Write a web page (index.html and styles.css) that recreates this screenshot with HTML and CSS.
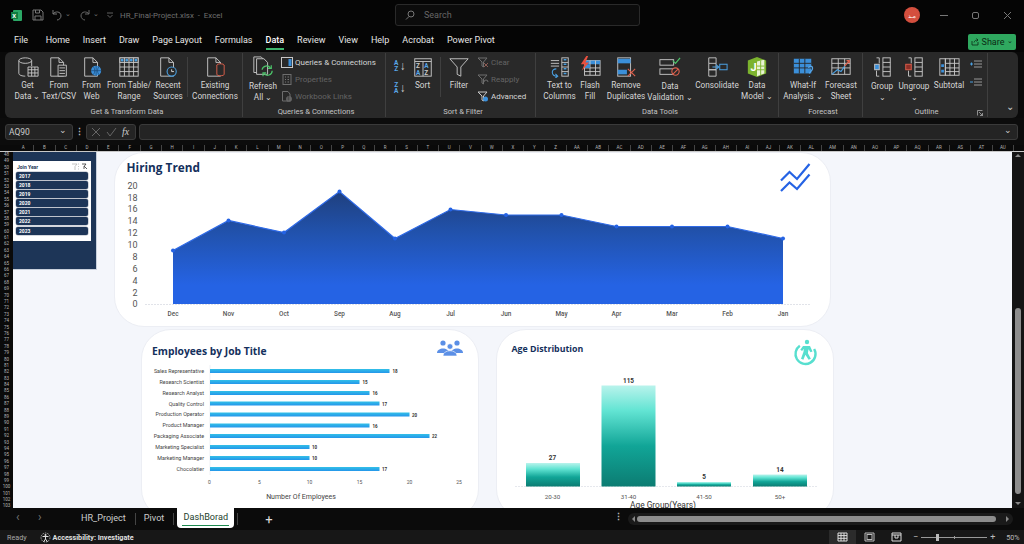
FILE: index.html
```html
<!DOCTYPE html>
<html lang="en">
<head>
    <meta charset="UTF-8">
    <title>HR_Final-Project.xlsx - Excel</title>
    <link rel="stylesheet" href="styles.css">
</head>
<body>
    <svg class="defs" width="0" height="0">
        <defs>
            <linearGradient id="areaFill" gradientUnits="userSpaceOnUse" x1="0" y1="190" x2="0" y2="285">
                <stop offset="0" stop-color="#1f3f7c"/>
                <stop offset="0.45" stop-color="#2152ad"/>
                <stop offset="1" stop-color="#2563e4"/>
            </linearGradient>
            <linearGradient id="ageFill" x1="0" y1="0" x2="0" y2="1">
                <stop offset="0" stop-color="#b9f3ec"/>
                <stop offset="0.25" stop-color="#62e4d3"/>
                <stop offset="0.6" stop-color="#11a597"/>
                <stop offset="1" stop-color="#0c7c72"/>
            </linearGradient>
            <linearGradient id="barFill" x1="0" y1="0" x2="0" y2="1">
                <stop offset="0" stop-color="#33c0e8"/>
                <stop offset="1" stop-color="#2496ea"/>
            </linearGradient>
        </defs>
    </svg>

    <!-- title bar -->
    <div class="titlebar">
        <svg class="app-logo" width="11" height="11" viewBox="0 0 11 11"><rect x="2" width="9" height="11" rx="1" fill="#2ba866"/><rect y="2" width="7" height="7" fill="#107c41"/><text x="1.2" y="7.6" class="logo-x">X</text></svg>
        <svg class="qa-icon save" width="12" height="12" viewBox="0 0 12 12"><path d="M1 1h8l2 2v8H1z M3.500 1v3h4V1 M3 11V7h6v4" fill="none" stroke="#777" stroke-width="1"/></svg>
        <svg class="qa-icon undo" width="12" height="12" viewBox="0 0 12 12"><path d="M2 1v4h4 M2 5c2-3 8-3 8 2 0 2-2 4-4 4" fill="none" stroke="#777" stroke-width="1"/></svg>
        <span class="qa-caret">⌄</span>
        <svg class="qa-icon redo" width="12" height="12" viewBox="0 0 12 12"><path d="M10 1v4H6 M10 5C8 2 2 2 2 7c0 2 2 4 4 4" fill="none" stroke="#666" stroke-width="1"/></svg>
        <span class="qa-caret">⌄</span>
        <svg class="qa-more" width="6" height="6" viewBox="0 0 6 6"><path d="M0 1h6M.5 3l2.500 2.500L5.500 3" fill="none" stroke="#777" stroke-width=".8"/></svg>
        <span class="doc-name">HR_Final-Project.xlsx &nbsp;-&nbsp; Excel</span>
        <div class="searchbox">
            <svg width="10" height="10" viewBox="0 0 10 10"><circle cx="6" cy="4" r="3" fill="none" stroke="#777"/><path d="M4 6.500 1 9.500" stroke="#777"/></svg>
            <span>Search</span>
        </div>
        <div class="avatar">مـد</div>
        <div class="win-btns">
            <span class="win-min"></span>
            <span class="win-max"></span>
            <svg width="9" height="9" viewBox="0 0 9 9"><path d="M1 1l7 7M8 1L1 8" stroke="#777"/></svg>
        </div>
    </div>

    <!-- menu tabs -->
    <div class="menubar">
        <span class="tab w-file">File</span>
        <span class="tab">Home</span>
        <span class="tab">Insert</span>
        <span class="tab">Draw</span>
        <span class="tab">Page Layout</span>
        <span class="tab">Formulas</span>
        <span class="tab active">Data</span>
        <span class="tab">Review</span>
        <span class="tab">View</span>
        <span class="tab">Help</span>
        <span class="tab">Acrobat</span>
        <span class="tab">Power Pivot</span>
        <div class="share">
            <svg width="8" height="8" viewBox="0 0 8 8"><path d="M1 3v4h6V4M3 4.500C3.500 2.500 5 2 6.500 2M5.500 .5l1.500 1.500L5.500 3.500" fill="none" stroke="#0b2a14" stroke-width=".8"/></svg>
            <span>Share</span><span class="share-caret">⌄</span>
        </div>
    </div>

    <!-- ribbon -->
    <div class="ribbon">
        <section class="group g-transform">
            <div class="tools">
                <div class="rb w-31">
                    <svg class="ico" width="24" height="24" viewBox="0 0 24 24"><ellipse cx="9" cy="5" rx="7" ry="3" class="ln"/><path d="M2 5v14c0 2 4 3 7 3M16 5v6" class="ln"/><path d="M12 12h11v10H12zM12 15h11M12 18.500h11M16 12v10M19.500 12v10" class="ln"/></svg>
                    <span>Get<br>Data ⌄</span>
                </div>
                <div class="rb w-32">
                    <svg class="ico" width="24" height="24" viewBox="0 0 24 24"><path d="M3 2h9l5 5v15H3zM12 2v5h5" class="ln"/><path d="M11 10h9v12h-9zM12.500 13h6M12.500 16h6M12.500 19h6" class="ln fill-dk"/></svg>
                    <span>From<br>Text/CSV</span>
                </div>
                <div class="rb w-33">
                    <svg class="ico" width="24" height="24" viewBox="0 0 24 24"><path d="M4 2h9l5 5v15H4zM13 2v5h5" class="ln"/><circle cx="16.500" cy="16" r="5.500" class="blue-fill"/><path d="M11 16h11M16.500 10.500v11M13.500 11.500c2 3 2 6 0 9M19.500 11.500c-2 3-2 6 0 9" class="ln-dk"/></svg>
                    <span>From<br>Web</span>
                </div>
                <div class="rb w-42">
                    <svg class="ico" width="24" height="24" viewBox="0 0 24 24"><rect x="2" y="2" width="20" height="20" class="ln"/><rect x="2" y="2" width="20" height="5" fill="#3e3e3e" stroke="#c8c8c8" stroke-width="1"/><path d="M2 12h20M2 17h20M7 2v20M12 2v20M17 2v20" class="ln"/><path d="M4.500 4.500h.01M9.500 4.500h.01M14.500 4.500h.01M19.500 4.500h.01" stroke="#4a9fe0" stroke-width="3" stroke-linecap="round"/></svg>
                    <span>From Table/<br>Range</span>
                </div>
                <div class="rb w-36">
                    <svg class="ico" width="24" height="24" viewBox="0 0 24 24"><path d="M4 2h9l5 5v15H4zM13 2v5h5" class="ln"/><circle cx="16" cy="17" r="5" fill="#292929" stroke="#4a9fe0" stroke-width="1.200"/><path d="M16 14.500V17h2.500" stroke="#ddd" fill="none"/></svg>
                    <span>Recent<br>Sources</span>
                </div>
                <i class="vsep"></i>
                <div class="rb w-52">
                    <svg class="ico" width="24" height="24" viewBox="0 0 24 24"><path d="M4 2h9l5 5v15H4zM13 2v5h5" class="ln"/><ellipse cx="18" cy="10" rx="4" ry="1.500" fill="#292929" stroke="#e0604c"/><path d="M14 10v10c0 2 8 2 8 0V10" fill="#292929" stroke="#e0604c"/></svg>
                    <span>Existing<br>Connections</span>
                </div>
            </div>
            <div class="group-name">Get &amp; Transform Data</div>
        </section>

        <section class="group g-queries">
            <div class="tools">
                <div class="rb w-32 refresh">
                    <svg class="ico" width="24" height="24" viewBox="0 0 24 24"><path d="M2 1h8l4 4v13H2z" class="ln"/><path d="M5 3h8l4 4v13H5z" class="ln fill-bg"/><path d="M11 15a5 5 0 0 1 9-2M22 16a5 5 0 0 1-9 3" fill="none" stroke="#4cc46a" stroke-width="1.300"/><path d="M21 10v3.500h-3.500M12 22v-3.500h3.500" fill="none" stroke="#4cc46a" stroke-width="1.300"/></svg>
                    <span>Refresh<br>All ⌄</span>
                </div>
                <div class="rb-list">
                    <div class="rb-line">
                        <svg width="12" height="11" viewBox="0 0 12 11"><rect x=".5" y=".5" width="11" height="10" class="ln"/><rect x="7.500" y="2" width="3" height="7" fill="#3b8fd9"/></svg>
                        Queries &amp; Connections
                    </div>
                    <div class="rb-line off">
                        <svg width="12" height="11" viewBox="0 0 12 11"><rect x="2" y=".5" width="8" height="10" class="ln-off"/><path d="M4 3h1M6.500 3H8M4 5.500h1M6.500 5.500H8M4 8h1M6.500 8H8" stroke="#777"/></svg>
                        Properties
                    </div>
                    <div class="rb-line off">
                        <svg width="12" height="11" viewBox="0 0 12 11"><path d="M1.500.5H7L9 3v7H1.500z" class="ln-off"/><path d="M5 8h6M6 6h4v4H6z" class="ln-off"/></svg>
                        Workbook Links
                    </div>
                </div>
            </div>
            <div class="group-name">Queries &amp; Connections</div>
        </section>

        <section class="group g-sort">
            <div class="tools">
                <div class="az">
                    <div class="az-btn"><b class="a">A<br>Z</b><em>↓</em></div>
                    <div class="az-btn"><b class="z">Z<br>A</b><em>↓</em></div>
                </div>
                <div class="rb w-25">
                    <svg class="ico" width="20" height="24" viewBox="0 0 20 24"><rect x="1" y="3" width="18" height="19" class="ln"/><path d="M1 6h18M10 6v16" class="ln"/><text x="2.500" y="13" class="sort-t">Z</text><text x="11.500" y="13" class="sort-t blue">A</text><text x="2.500" y="20.500" class="sort-t blue">A</text><text x="11.500" y="20.500" class="sort-t">Z</text></svg>
                    <span>Sort</span>
                </div>
                <i class="vsep s-filter"></i>
                <div class="rb w-26">
                    <svg class="ico" width="24" height="24" viewBox="0 0 24 24"><path d="M2 3h20l-8 9v10l-4-2v-8z" class="ln"/></svg>
                    <span>Filter</span>
                </div>
                <div class="rb-list filter-list">
                    <div class="rb-line off">
                        <svg width="12" height="11" viewBox="0 0 12 11"><path d="M1 1h9L6.500 5v5L5 9V5z" class="ln-off"/><path d="M7 6l4 4M11 6l-4 4" stroke="#8a5a52"/></svg>
                        Clear
                    </div>
                    <div class="rb-line off">
                        <svg width="12" height="11" viewBox="0 0 12 11"><path d="M1 1h9L6.500 5v5L5 9V5z" class="ln-off"/><path d="M7 8a2 2 0 0 1 4 0" class="ln-off"/></svg>
                        Reapply
                    </div>
                    <div class="rb-line">
                        <svg width="12" height="11" viewBox="0 0 12 11"><path d="M1 1h9L6.500 5v5L5 9V5z" class="ln"/><circle cx="8.500" cy="8" r="2.500" fill="#3b8fd9"/></svg>
                        Advanced
                    </div>
                </div>
            </div>
            <div class="group-name">Sort &amp; Filter</div>
        </section>

        <section class="group g-tools">
            <div class="tools">
                <div class="rb w-35">
                    <svg class="ico" width="24" height="24" viewBox="0 0 24 24"><path d="M2 5h9M2 8h9M2 11h9" class="ln"/><rect x="14" y="2" width="7" height="20" class="ln"/><path d="M14 7h7M14 12h7M14 17h7" class="ln"/><path d="M16 4h3M16 9h3M16 14h3M16 19h3" stroke="#4a9fe0" stroke-width="1.600"/><path d="M8 14c-6 0-6 8 1 8M7 19.500l2.500 2.500L7 24" fill="none" stroke="#4a9fe0" stroke-width="1.200"/></svg>
                    <span>Text to<br>Columns</span>
                </div>
                <div class="rb w-26">
                    <svg class="ico" width="24" height="24" viewBox="0 0 24 24"><rect x="6" y="5" width="17" height="16" class="ln"/><rect x="6" y="5" width="17" height="4" fill="#3b8fd9"/><path d="M6 13h17M6 17h17M12 5v16M18 5v16" class="ln"/><rect x="6" y="9" width="6" height="4" fill="#3b8fd9"/><path d="M8 0 2 9h4l-3 7 8-9H7l3-7z" fill="#e8503f"/></svg>
                    <span>Flash<br>Fill</span>
                </div>
                <div class="rb w-46">
                    <svg class="ico" width="24" height="24" viewBox="0 0 24 24"><rect x="3" y="2" width="14" height="20" class="ln"/><rect x="3" y="3" width="14" height="5" fill="#3b8fd9"/><rect x="3" y="15" width="10" height="5" fill="#3b8fd9"/><path d="M14 14l8 8M22 14l-8 8" stroke="#e0604c" stroke-width="1.200"/></svg>
                    <span>Remove<br>Duplicates</span>
                </div>
                <div class="rb w-42 drop-2">
                    <svg class="ico" width="24" height="24" viewBox="0 0 24 24"><rect x="1" y="4" width="15" height="6" class="ln"/><rect x="1" y="14" width="15" height="6" class="ln"/><path d="M15 5l3 3 5-6" fill="none" stroke="#4cc46a" stroke-width="1.300"/><circle cx="18" cy="17" r="4" fill="#292929" stroke="#e0604c" stroke-width="1.200"/><path d="M15 20l6-6" stroke="#e0604c" stroke-width="1.200"/></svg>
                    <span>Data<br>Validation ⌄</span>
                </div>
                <div class="rb w-52">
                    <svg class="ico" width="24" height="24" viewBox="0 0 24 24"><path d="M3 2h8v6H3zM3 8v7h8V8M3 15h8v7H3z" class="ln"/><path d="M7 12h7M11 9.500l3 2.500-3 2.500" fill="none" stroke="#4a9fe0" stroke-width="1.100"/><rect x="15" y="9" width="8" height="6" fill="none" stroke="#4a9fe0" stroke-width="1.100"/></svg>
                    <span>Consolidate</span>
                </div>
                <div class="rb w-28">
                    <svg class="ico" width="24" height="24" viewBox="0 0 24 24"><path d="M12 1l10 4v14l-10 4-10-4V5z" fill="#7cb32e"/><path d="M12 6l8-2v15l-8 3z" fill="#e9f3d5"/><path d="M12 11h8M12 15h8M16 5v16" stroke="#7cb32e"/><text x="5" y="16" class="model-j">J</text></svg>
                    <span>Data<br>Model ⌄</span>
                </div>
            </div>
            <div class="group-name">Data Tools</div>
        </section>

        <section class="group g-forecast">
            <div class="tools">
                <div class="rb w-38">
                    <svg class="ico" width="24" height="24" viewBox="0 0 24 24"><rect x="2" y="3" width="19" height="16" fill="#3b8fd9"/><path d="M2 8h19M2 13h19M8 3v16M14 3v16" stroke="#292929"/><path d="M18 13c1-3 6-2 4 2-1 2-3 2-3 4M19 22v1" fill="none" stroke="#58a6e6" stroke-width="1.300"/></svg>
                    <span>What-If<br>Analysis ⌄</span>
                </div>
                <div class="rb w-38">
                    <svg class="ico" width="24" height="24" viewBox="0 0 24 24"><rect x="2" y="3" width="20" height="17" class="ln"/><path d="M2 8h20M2 13h20M9 3v17M16 3v17" class="ln"/><path d="M2 20l6-5 4 2 4-6" fill="none" stroke="#4a9fe0" stroke-width="1.300"/><path d="M16 11l5-6M18 5h3v3" fill="none" stroke="#e0604c" stroke-width="1.300"/></svg>
                    <span>Forecast<br>Sheet</span>
                </div>
            </div>
            <div class="group-name">Forecast</div>
        </section>

        <section class="group g-outline">
            <div class="tools">
                <div class="rb w-32 drop-2">
                    <svg class="ico" width="24" height="24" viewBox="0 0 24 24"><rect x="13" y="2" width="8" height="20" class="ln"/><path d="M13 7h8M13 12h8M13 17h8M6 2h3v6M9 22H6v-6M6 8v0M6 9v6" class="ln"/><rect x="4" y="9" width="5" height="6" fill="#3b8fd9" stroke="#c8c8c8"/></svg>
                    <span>Group<br>⌄</span>
                </div>
                <div class="rb w-32 drop-2">
                    <svg class="ico" width="24" height="24" viewBox="0 0 24 24"><rect x="13" y="2" width="8" height="20" class="ln"/><path d="M13 7h8M13 12h8M13 17h8M6 2h3v6M9 22H6v-6" class="ln"/><rect x="3" y="9" width="6" height="6" fill="#8c2f28" stroke="#e0604c"/></svg>
                    <span>Ungroup<br>⌄</span>
                </div>
                <div class="rb w-38">
                    <svg class="ico" width="24" height="24" viewBox="0 0 24 24"><rect x="8" y="3" width="15" height="18" class="ln"/><path d="M8 8h15M8 13h15M8 17h15M13 3v18M18 3v18" class="ln"/><rect x="2" y="3" width="6" height="18" class="ln"/><rect x="3.500" y="9" width="3" height="3" fill="#3b8fd9"/><rect x="3.500" y="15" width="3" height="3" fill="#3b8fd9"/></svg>
                    <span>Subtotal</span>
                </div>
                <div class="outline-small">
                    <svg width="12" height="9" viewBox="0 0 12 9"><path d="M4 1h8M4 4h8M4 7h8" stroke="#999"/><path d="M0 4h3M1.500 2.500v3" stroke="#4a9fe0"/></svg>
                    <svg width="12" height="9" viewBox="0 0 12 9"><path d="M4 1h8M4 4h8M4 7h8" stroke="#999"/><path d="M0 4h3" stroke="#4a9fe0"/></svg>
                </div>
            </div>
            <div class="group-name">Outline<svg class="launcher" width="6" height="6" viewBox="0 0 6 6"><path d="M.5 5.500V.5h5M2 2l3.500 3.500M3 5.500h2.500V3" fill="none" stroke="#bbb" stroke-width=".7"/></svg></div>
        </section>
        <div class="collapse">⌄</div>
    </div>

    <!-- formula bar -->
    <div class="formula-row">
        <div class="namebox">AQ90<span>⌄</span></div>
        <div class="fdots">⋮</div>
        <div class="fx-box">
            <svg width="10" height="10" viewBox="0 0 10 10"><path d="M1 1l8 8M9 1 1 9" stroke="#666"/></svg>
            <svg width="11" height="10" viewBox="0 0 11 10"><path d="M1 5l3 4 6-8" fill="none" stroke="#666"/></svg>
            <em>fx</em>
        </div>
        <div class="finput"><span>⌄</span></div>
    </div>

    <!-- column letters -->
    <div class="col-heads">
        <span>A</span><span>B</span><span>C</span><span>D</span><span>E</span><span>F</span><span>G</span><span>H</span><span>I</span><span>J</span><span>K</span><span>L</span><span>M</span><span>N</span><span>O</span><span>P</span><span>Q</span><span>R</span><span>S</span><span>T</span><span>U</span><span>V</span><span>W</span><span>X</span><span>Y</span><span>Z</span><span>AA</span><span>AB</span><span>AC</span><span>AD</span><span>AE</span><span>AF</span><span>AG</span><span>AH</span><span>AI</span><span>AJ</span><span>AK</span><span>AL</span><span>AM</span><span>AN</span><span>AO</span><span>AP</span><span>AQ</span><span>AR</span><span>AS</span><span>AT</span><span>AU</span>
    </div>

    <div class="sheet-row">
        <div class="row-heads">
            <span>48</span><span>49</span><span>50</span><span>51</span><span>52</span><span>53</span><span>54</span><span>55</span><span>56</span><span>57</span><span>58</span><span>59</span><span>60</span><span>61</span><span>62</span><span>63</span><span>64</span><span>65</span><span>66</span><span>67</span><span>68</span><span>69</span><span>70</span><span>71</span><span>72</span><span>73</span><span>74</span><span>75</span><span>76</span><span>77</span><span>78</span><span>79</span><span>80</span><span>81</span><span>82</span><span>83</span><span>84</span><span>85</span><span>86</span><span>87</span><span>88</span><span>89</span><span>90</span><span>91</span><span>92</span><span>93</span><span>94</span><span>95</span><span>96</span><span>97</span><span>98</span><span>99</span><span>100</span><span>101</span><span>102</span><span>103</span>
        </div>

        <div class="sheet">
            <!-- slicer -->
            <div class="side-panel">
                <div class="slicer">
                    <div class="slicer-head">
                        <span>Join Year</span>
                        <svg width="15" height="7" viewBox="0 0 15 7"><path d="M0 1h5L3 3.500V7M6 1h1M6 3.500h1M6 6h1" fill="none" stroke="#aaa" stroke-width=".7"/><path d="M10 1h4l-2 2.500V6M12 3l3 3" fill="none" stroke="#333" stroke-width=".8"/></svg>
                    </div>
                    <div class="slicer-item">2017</div>
                    <div class="slicer-item">2018</div>
                    <div class="slicer-item">2019</div>
                    <div class="slicer-item">2020</div>
                    <div class="slicer-item">2021</div>
                    <div class="slicer-item">2022</div>
                    <div class="slicer-item">2023</div>
                </div>
                <div class="panel-dots"></div>
            </div>

            <!-- hiring trend -->
            <div class="card card-trend">
                <svg class="chart" width="716" height="174" viewBox="114 152 716 174">
                    <text x="126.500" y="171.500" class="ttl ttl-lg">Hiring Trend</text>
                    <g class="y-labels">
                        <text x="137.500" y="188.500">20</text><text x="137.500" y="200.500">18</text><text x="137.500" y="212">16</text><text x="137.500" y="224">14</text><text x="137.500" y="236">12</text><text x="137.500" y="248">10</text><text x="137.500" y="259.500">8</text><text x="137.500" y="271.500">6</text><text x="137.500" y="283.500">4</text><text x="137.500" y="295.500">2</text><text x="137.500" y="307">0</text>
                    </g>
                    <path d="M145 304.500H810" stroke="#d9dce3" stroke-width=".8" stroke-dasharray="2 1"/>
                    <path d="M173 250.500 228.500 220.500 284 232.500 339.500 191.500 395 238.500 450.500 209.500 506 215 561.500 215 616.500 226.500 672 226.500 727.500 226.500 783 238.500V304H173Z" fill="url(#areaFill)"/>
                    <path d="M173 250.500 228.500 220.500 284 232.500 339.500 191.500 395 238.500 450.500 209.500 506 215 561.500 215 616.500 226.500 672 226.500 727.500 226.500 783 238.500" fill="none" stroke="#2f6ae6" stroke-width="1.200"/>
                    <g fill="#2563e4">
                        <circle cx="173" cy="250.500" r="2"/><circle cx="228.500" cy="220.500" r="2"/><circle cx="284" cy="232.500" r="2"/><circle cx="339.500" cy="191.500" r="2"/><circle cx="395" cy="238.500" r="2"/><circle cx="450.500" cy="209.500" r="2"/><circle cx="506" cy="215" r="2"/><circle cx="561.500" cy="215" r="2"/><circle cx="616.500" cy="226.500" r="2"/><circle cx="672" cy="226.500" r="2"/><circle cx="727.500" cy="226.500" r="2"/><circle cx="783" cy="238.500" r="2"/>
                    </g>
                    <g class="x-labels">
                        <text x="173" y="315.500">Dec</text><text x="228.500" y="315.500">Nov</text><text x="284" y="315.500">Oct</text><text x="339.500" y="315.500">Sep</text><text x="395" y="315.500">Aug</text><text x="450.500" y="315.500">Jul</text><text x="506" y="315.500">Jun</text><text x="561.500" y="315.500">May</text><text x="616.500" y="315.500">Apr</text><text x="672" y="315.500">Mar</text><text x="727.500" y="315.500">Feb</text><text x="783" y="315.500">Jan</text>
                    </g>
                    <path d="M781 180.500 789.500 172 797 179 809.500 164M781 191 789.500 182.500 797 189 809.500 174.500" fill="none" stroke="#2563e4" stroke-width="2.200"/>
                </svg>
            </div>

            <!-- job titles -->
            <div class="card card-jobs">
                <svg class="chart" width="337" height="181" viewBox="141 329 337 181">
                    <text x="152" y="355" class="ttl">Employees by Job Title</text>
                    <g fill="#5b8fe6">
                        <circle cx="443" cy="343" r="2.600"/><path d="M437 353c0-6 12-6 12 0z"/>
                        <circle cx="457" cy="343" r="2.600"/><path d="M451 353c0-6 12-6 12 0z"/>
                        <circle cx="450" cy="346.500" r="2.800" stroke="#fff" stroke-width=".6"/><path d="M443 356c0-7 14-7 14 0z" stroke="#fff" stroke-width=".6"/>
                    </g>
                    <g class="job-labels">
                        <text x="204" y="373">Sales Representative</text><text x="204" y="384">Research Scientist</text><text x="204" y="394.500">Research Analyst</text><text x="204" y="405.500">Quality Control</text><text x="204" y="416">Production Operator</text><text x="204" y="427">Product Manager</text><text x="204" y="438">Packaging Associate</text><text x="204" y="449">Marketing Specialist</text><text x="204" y="459.500">Marketing Manager</text><text x="204" y="470.500">Chocolatier</text>
                    </g>
                    <path d="M210 365V475" stroke="#e6e8ee" stroke-width=".6"/>
                    <g fill="url(#barFill)">
                        <rect x="210" y="369" width="179.500" height="4"/><rect x="210" y="380" width="149.500" height="4"/><rect x="210" y="391" width="159.500" height="4"/><rect x="210" y="401.500" width="169.500" height="4"/><rect x="210" y="412.500" width="199.500" height="4"/><rect x="210" y="423.500" width="159.500" height="4"/><rect x="210" y="434" width="219.500" height="4"/><rect x="210" y="445" width="99.500" height="4"/><rect x="210" y="456" width="99.500" height="4"/><rect x="210" y="467" width="169.500" height="4"/>
                    </g>
                    <g class="bar-vals">
                        <text x="392.500" y="373">18</text><text x="362.500" y="384">15</text><text x="372.500" y="394.500">16</text><text x="382" y="405.500">17</text><text x="412" y="416.500">20</text><text x="372.500" y="427.500">16</text><text x="432" y="438">22</text><text x="312" y="449">10</text><text x="312" y="460">10</text><text x="382" y="471">17</text>
                    </g>
                    <g class="axis-vals">
                        <text x="209.500" y="484">0</text><text x="259.500" y="484">5</text><text x="309.500" y="484">10</text><text x="359.500" y="484">15</text><text x="409.500" y="484">20</text><text x="459" y="484">25</text>
                    </g>
                    <text x="301" y="498.500" class="axis-title">Number Of Employees</text>
                </svg>
            </div>

            <!-- age -->
            <div class="card card-age">
                <svg class="chart" width="337" height="181" viewBox="496 329 337 181">
                    <text x="511.500" y="352" class="ttl ttl-sm">Age Distribution</text>
                    <circle cx="805.500" cy="354" r="10" fill="none" stroke="#57dfcf" stroke-width="2.400" stroke-dasharray="46 17" transform="rotate(-30 805.500 354)"/>
                    <circle cx="807" cy="342" r="2.200" fill="#57dfcf"/>
                    <path d="M803 346h7l2.500 5.500-2 .8-2-3-.6 4 3 5.500-2.300 1-3.200-5-2 5-2.400-1 2.500-7 .3-3-1.700 2.200-1.800-1.200z" fill="#57dfcf"/>
                    <path d="M515 486.500H818" stroke="#dfe2e8" stroke-width=".8" stroke-dasharray="2 1"/>
                    <g fill="url(#ageFill)">
                        <rect x="526" y="463" width="54" height="23.500"/><rect x="601.500" y="385.500" width="54" height="101"/><rect x="677" y="482" width="54" height="4.500"/><rect x="753" y="474.500" width="54" height="12"/>
                    </g>
                    <g class="age-vals">
                        <text x="552.500" y="460">27</text><text x="628.500" y="382.500">115</text><text x="704" y="479">5</text><text x="780" y="471.500">14</text>
                    </g>
                    <g class="age-cats">
                        <text x="552.500" y="499">20-30</text><text x="628.500" y="499">31-40</text><text x="704" y="499">41-50</text><text x="780" y="499">50+</text>
                    </g>
                </svg>
            </div>
            <div class="age-axis-title">Age Group(Years)</div>
        </div>

        <div class="vscroll">
            <i class="arrow-up"></i>
            <div class="vtrack"><div class="vthumb"></div></div>
            <i class="arrow-down"></i>
        </div>
    </div>

    <!-- sheet tabs -->
    <div class="tabbar">
        <span class="nav">‹</span>
        <span class="nav nav-2">›</span>
        <span class="sheet-tab t-hr">HR_Project</span>
        <i class="tab-sep"></i>
        <span class="sheet-tab t-pivot">Pivot</span>
        <i class="tab-sep"></i>
        <span class="sheet-tab current">DashBorad</span>
        <i class="tab-sep"></i>
        <span class="add-sheet">+</span>
        <span class="tab-dots">⋮</span>
        <div class="hscroll">
            <i class="arrow-left"></i>
            <div class="hthumb"></div>
            <i class="arrow-right"></i>
        </div>
    </div>

    <!-- status bar -->
    <div class="statusbar">
        <span class="ready">Ready</span>
        <svg class="a11y-ico" width="11" height="11" viewBox="0 0 11 11"><circle cx="5.500" cy="5.500" r="4.500" fill="none" stroke="#aaa" stroke-dasharray="1.500 1"/><circle cx="5.500" cy="3" r="1" fill="#ddd"/><path d="M2.500 4.500h6M5.500 4.500v2.500L3.500 10M5.500 7l2 3" fill="none" stroke="#ddd"/></svg>
        <span class="a11y">Accessibility: Investigate</span>
        <div class="views">
            <div class="view active-view"><svg width="11" height="10" viewBox="0 0 11 10"><path d="M1 1h9v8H1zM1 3.600h9M1 6.300h9M4 1v8M7 1v8" fill="none" stroke="#ddd"/></svg></div>
            <div class="view"><svg width="11" height="10" viewBox="0 0 11 10"><path d="M1 1h9v8H1z" fill="none" stroke="#bbb"/><rect x="3" y="2.500" width="5" height="5" fill="none" stroke="#bbb"/></svg></div>
            <div class="view"><svg width="11" height="10" viewBox="0 0 11 10"><path d="M1 1h9v8H1zM1 3h9M4 3v3h3V3" fill="none" stroke="#ddd"/></svg></div>
        </div>
        <div class="zoom">
            <span class="zm">−</span>
            <div class="slider"><i class="knob"></i><i class="mid"></i></div>
            <span class="zm">+</span>
            <span class="pct">50%</span>
        </div>
    </div>
</body>
</html>
```

FILE: styles.css
```css
* {
    margin: 0;
    padding: 0;
    box-sizing: border-box;
}

html, body {
    width: 1024px;
    height: 544px;
    overflow: hidden;
}

body {
    font-family: Roboto, "Noto Sans", sans-serif;
    background: #0a0a0a;
    color: #ddd;
    display: flex;
    flex-direction: column;
}

.defs {
    position: absolute;
}

i, em {
    font-style: normal;
}

.ln { fill: none; stroke: #c8c8c8; stroke-width: 1; }
.ln-off { fill: none; stroke: #6e6e6e; stroke-width: 1; }
.ln-dk { fill: none; stroke: #1a4a78; stroke-width: .8; }
.fill-dk { fill: #292929; }
.fill-bg { fill: #292929; }
.blue-fill { fill: #3b8fd9; }

/* title bar */
.titlebar {
    height: 30px;
    flex: none;
    background: #050505;
    display: flex;
    align-items: center;
    padding-left: 11px;
    color: #777;
    font-size: 7.900px;
}

.logo-x {
    font-size: 6px;
    font-weight: 700;
    fill: #fff;
}

.save { margin-left: 10px; }
.undo { margin-left: 7px; }
.redo { margin-left: 7px; }

.qa-caret {
    flex: none;
    width: 7px;
    font-size: 7px;
    margin: 0 0 3px 2px;
    color: #777;
}

.qa-more {
    flex: none;
    margin-left: 7px;
}

.doc-name {
    margin-left: 7px;
    width: 275px;
    flex: none;
    white-space: nowrap;
    color: #707070;
}

.searchbox {
    width: 245px;
    height: 22px;
    flex: none;
    border: 1px solid #2a2a2a;
    border-radius: 3px;
    background: #0c0c0c;
    display: flex;
    align-items: center;
    gap: 9px;
    padding-left: 9px;
    font-size: 9px;
    color: #666;
}

.avatar {
    width: 16px;
    height: 16px;
    flex: none;
    margin-left: 264px;
    border-radius: 50%;
    background: #d44f3e;
    color: #fff;
    font-family: "DejaVu Sans", sans-serif;
    font-size: 6px;
    display: flex;
    align-items: center;
    justify-content: center;
}

.win-btns {
    display: flex;
    align-items: center;
    gap: 24px;
    margin-left: 20px;
}

.win-min {
    width: 8px;
    height: 1px;
    background: #777;
}

.win-max {
    width: 7px;
    height: 7px;
    border: 1px solid #777;
    border-radius: 2px;
}

/* menu */
.menubar {
    height: 22px;
    flex: none;
    background: #050505;
    display: flex;
    align-items: center;
    padding-left: 14px;
    font-size: 9px;
    color: #e6e6e6;
    position: relative;
}

.tab {
    margin-right: 13px;
    padding-bottom: 2px;
    white-space: nowrap;
}

.tab.w-file {
    margin-right: 17.500px;
}

.tab.active {
    color: #fff;
    font-weight: 500;
    position: relative;
}

.tab.active::after {
    content: "";
    position: absolute;
    left: 0;
    right: 0;
    bottom: -3px;
    height: 2px;
    background: #3fb56e;
}

.share {
    position: absolute;
    left: 968px;
    top: 4px;
    width: 48px;
    height: 16px;
    border-radius: 2px;
    background: #2fa85f;
    color: #0b2a14;
    font-size: 9px;
    display: flex;
    align-items: center;
    justify-content: center;
    gap: 3px;
}

.share-caret {
    font-size: 7px;
    margin-bottom: 3px;
}

/* ribbon */
.ribbon {
    height: 66px;
    flex: none;
    margin: 0 6px 0 5px;
    background: #292929;
    border-radius: 6px;
    display: flex;
    position: relative;
}

.group {
    display: flex;
    flex-direction: column;
    border-right: 1px solid #3f3f3f;
    margin: 1px 0;
    padding-top: 2px;
    height: 64px;
    flex: none;
}

.g-transform { width: 238px; padding-left: 7px; }
.g-queries { width: 143px; padding-left: 4px; }
.g-sort { width: 150px; padding-left: 5px; }
.g-tools { width: 243px; padding-left: 6px; }
.g-forecast { width: 84px; padding-left: 5px; }
.g-outline { width: 125px; padding-left: 3px; position: relative; }

.tools {
    flex: 1;
    display: flex;
}

.group-name {
    height: 11px;
    font-size: 7.600px;
    line-height: 11px;
    text-align: center;
    color: #c4c4c4;
}

.launcher {
    position: absolute;
    right: 4px;
    bottom: 1px;
}

.rb {
    flex: none;
    display: flex;
    flex-direction: column;
    align-items: center;
    font-size: 8.200px;
    line-height: 10.500px;
    text-align: center;
    color: #d6d6d6;
    white-space: nowrap;
}

.rb .ico {
    height: 22px;
    margin: 1px 0 2px;
    flex: none;
}

.w-25 { width: 25px; }
.w-26 { width: 26px; }
.w-28 { width: 28px; }
.w-31 { width: 31px; }
.w-32 { width: 32px; }
.w-33 { width: 33px; }
.w-35 { width: 35px; }
.w-36 { width: 36px; }
.w-38 { width: 38px; }
.w-42 { width: 42px; }
.w-46 { width: 46px; }
.w-52 { width: 52px; }

.refresh .ico { margin-bottom: 3px; }
.drop-2 span { margin-top: 1px; }

.vsep {
    width: 1px;
    height: 40px;
    margin: 2px 1px 0;
    background: #3f3f3f;
    flex: none;
}

.vsep.s-filter {
    margin: 2px 5px 0;
}

.rb-list {
    display: flex;
    flex-direction: column;
    gap: 6px;
    padding: 2px 0 0 2px;
}

.rb-line {
    display: flex;
    align-items: center;
    gap: 2px;
    height: 11px;
    font-size: 8px;
    color: #d6d6d6;
    white-space: nowrap;
}

.rb-line.off {
    color: #646464;
}

.filter-list {
    padding-left: 5px;
}

.az {
    width: 19px;
    display: flex;
    flex-direction: column;
    gap: 10px;
    padding: 5px 0 0 3px;
}

.az-btn {
    display: flex;
    align-items: center;
    font-size: 6.500px;
    line-height: 6px;
    text-align: center;
}

.az-btn b { color: #5aa7e8; }
.az-btn em {
    font-size: 12px;
    color: #ccc;
    margin-left: 1px;
}

.sort-t {
    font-size: 7px;
    font-weight: 700;
    fill: #ccc;
}

.sort-t.blue { fill: #5aa7e8; }

.model-j {
    font-size: 12px;
    font-weight: 700;
    fill: #fff;
}

.outline-small {
    display: flex;
    flex-direction: column;
    gap: 9px;
    padding: 5px 0 0 2px;
}

.collapse {
    position: absolute;
    right: 4px;
    bottom: 6px;
    color: #ccc;
    font-size: 10px;
    line-height: 10px;
}

/* formula bar */
.formula-row {
    height: 27px;
    flex: none;
    display: flex;
    align-items: center;
    padding: 0 6px 0 5px;
    background: #0c0c0c;
    font-size: 8.500px;
    color: #ccc;
}

.namebox {
    width: 68px;
    height: 16px;
    background: #242424;
    border: 1px solid #3a3a3a;
    border-radius: 3px;
    display: flex;
    justify-content: space-between;
    align-items: center;
    padding: 0 5px 0 3px;
}

.namebox span {
    margin-bottom: 3px;
}

.fdots {
    width: 13px;
    text-align: center;
    font-weight: 700;
    color: #bbb;
}

.fx-box {
    width: 50px;
    height: 16px;
    background: #242424;
    border: 1px solid #3a3a3a;
    border-radius: 3px;
    display: flex;
    align-items: center;
    gap: 5px;
    padding-left: 4px;
}

.fx-box em {
    font-family: "Liberation Serif", serif;
    font-style: italic;
    font-size: 10px;
    color: #ccc;
}

.finput {
    flex: 1;
    height: 16px;
    margin-left: 3px;
    background: #242424;
    border: 1px solid #3a3a3a;
    border-radius: 3px;
    text-align: right;
    padding-right: 5px;
    line-height: 11px;
}

/* headers */
.col-heads {
    height: 6px;
    flex: none;
    padding-left: 13px;
    background: #0a0a0a;
    display: flex;
    overflow: hidden;
}

.col-heads span {
    flex: none;
    width: 21.300px;
    font-size: 4.500px;
    line-height: 6px;
    text-align: center;
    color: #b5b5b5;
    border-right: 1px solid #444;
}

.sheet-row {
    flex: 1;
    min-height: 0;
    display: flex;
    border-top: 1px solid #c8c8c8;
}

.row-heads {
    width: 13px;
    flex: none;
    background: #0a0a0a;
    overflow: hidden;
}

.row-heads span {
    display: block;
    height: 6.400px;
    font-size: 4.500px;
    line-height: 6.400px;
    text-align: center;
    color: #b5b5b5;
}

/* sheet canvas, everything here floats on it like excel shapes */
.sheet {
    flex: 1;
    position: relative;
    background: #f4f6fb;
    overflow: hidden;
}

.side-panel {
    position: absolute;
    left: 0;
    top: 0;
    width: 84px;
    height: 118px;
    background: #1d3557;
    border: 1px solid #c8d0dc;
    border-width: 0 1px 1px 0;
}

.slicer {
    margin-top: 9px;
    width: 78px;
    height: 80px;
    background: #fff;
    padding: 0 3px;
}

.slicer-head {
    height: 11px;
    display: flex;
    align-items: center;
    justify-content: space-between;
    padding: 0 1px 0 1px;
    font-size: 5px;
    font-weight: 700;
    color: #1d3557;
}

.slicer-item {
    height: 8px;
    margin-bottom: 1.100px;
    background: #1d3557;
    border-radius: 2px;
    box-shadow: 0 0 0 .5px #a9b0bb;
    font-size: 5px;
    font-weight: 700;
    line-height: 8px;
    padding-left: 3px;
    color: #fff;
}

.panel-dots {
    margin: 9px 4px 0;
    height: 17px;
    background-image: radial-gradient(#52688a .5px, transparent .6px);
    background-size: 6px 4px;
}

.card {
    position: absolute;
    background: #fff;
    border: 1px solid #eceef4;
    border-radius: 30px;
    overflow: hidden;
}

.card-trend { left: 101px; top: 0; width: 717px; height: 175px; }
.card-jobs { left: 128px; top: 177px; width: 338px; height: 190px; }
.card-age { left: 483px; top: 177px; width: 338px; height: 190px; }

.chart {
    display: block;
    margin: -1px 0 0 -1px;
}

.ttl {
    font-family: "Open Sans", sans-serif;
    font-size: 10.300px;
    font-weight: 700;
    fill: #14305c;
}

.ttl-lg { font-size: 11.800px; }
.ttl-sm { font-size: 8.800px; }

.y-labels text {
    font-size: 9px;
    text-anchor: end;
    fill: #555;
}

.x-labels text {
    font-size: 6.400px;
    font-weight: 500;
    text-anchor: middle;
    fill: #555;
}

.job-labels text {
    font-size: 5.400px;
    text-anchor: end;
    fill: #444;
}

.bar-vals text {
    font-size: 4.500px;
    font-weight: 700;
    fill: #333;
}

.axis-vals text {
    font-size: 5px;
    text-anchor: middle;
    fill: #555;
}

.axis-title {
    font-size: 7px;
    text-anchor: middle;
    fill: #444;
}

.age-vals text {
    font-size: 6.400px;
    font-weight: 700;
    text-anchor: middle;
    fill: #333;
}

.age-cats text {
    font-size: 6.200px;
    text-anchor: middle;
    fill: #555;
}

.age-axis-title {
    position: absolute;
    left: 600px;
    top: 348px;
    width: 100px;
    text-align: center;
    font-size: 8.400px;
    line-height: 10px;
    color: #333;
}

/* scrollbars */
.vscroll {
    width: 12px;
    flex: none;
    background: #141414;
    display: flex;
    flex-direction: column;
    align-items: center;
    justify-content: space-between;
    padding: 2px 0 3px;
}

.vtrack {
    flex: 1;
    width: 100%;
    display: flex;
    align-items: flex-end;
    justify-content: center;
    padding: 0 0 8px;
}

.vthumb {
    width: 6px;
    height: 186px;
    background: #8d8d8d;
    border-radius: 3px;
}

.arrow-up, .arrow-down, .arrow-left, .arrow-right {
    width: 0;
    height: 0;
    flex: none;
    border: 3px solid transparent;
}

.arrow-up { border-bottom-color: #888; border-top-width: 0; }
.arrow-down { border-top-color: #888; border-bottom-width: 0; }
.arrow-left { border-right-color: #888; border-left-width: 0; }
.arrow-right { border-left-color: #888; border-right-width: 0; }

.tabbar {
    height: 22px;
    flex: none;
    background: #0b0b0b;
    display: flex;
    align-items: center;
    font-size: 9.100px;
    color: #ccc;
    position: relative;
}

.nav {
    position: absolute;
    left: 16px;
    top: 2px;
    font-size: 12px;
    color: #777;
}

.nav-2 {
    left: 38px;
}

.sheet-tab {
    height: 20px;
    line-height: 19px;
    white-space: nowrap;
}

.t-hr { margin-left: 81px; }
.t-pivot { margin-left: 8px; }

.tab-sep {
    width: 1px;
    height: 12px;
    background: #444;
    margin-left: 9px;
    flex: none;
}

.sheet-tab.current {
    align-self: flex-start;
    width: 57px;
    margin-left: 3px;
    text-align: center;
    background: #fff;
    color: #1e3f2d;
    border-radius: 0 0 4px 4px;
    position: relative;
}

.sheet-tab.current::after {
    content: "";
    position: absolute;
    left: 5px;
    right: 5px;
    bottom: 2px;
    height: 1px;
    background: #1d8a50;
}

.sheet-tab.current + .tab-sep {
    margin-left: 3px;
}

.add-sheet {
    margin-left: 27px;
    font-size: 13px;
    color: #ddd;
}

.tab-dots {
    position: absolute;
    left: 614px;
    top: 4px;
    font-weight: 700;
    color: #bbb;
}

.hscroll {
    position: absolute;
    left: 628px;
    top: 5px;
    width: 385px;
    height: 12px;
    background: #1a1a1a;
    border-radius: 6px;
    display: flex;
    align-items: center;
    gap: 2px;
    padding: 0 4px;
}

.hthumb {
    flex: 1;
    height: 6px;
    background: #8d8d8d;
    border-radius: 3px;
    margin-right: 8px;
}

.statusbar {
    height: 14px;
    flex: none;
    background: #171717;
    display: flex;
    align-items: center;
    padding-left: 7px;
    font-size: 7.200px;
    color: #a8a8a8;
    position: relative;
}

.a11y-ico {
    margin-left: 13px;
}

.a11y {
    margin-left: 2px;
    color: #e0e0e0;
    font-weight: 700;
}

.views {
    position: absolute;
    left: 829px;
    top: 0;
    display: flex;
}

.view {
    width: 27px;
    height: 14px;
    display: flex;
    align-items: center;
    justify-content: center;
}

.active-view {
    background: #2b2b2b;
}

.zoom {
    position: absolute;
    left: 913px;
    top: 0;
    height: 14px;
    display: flex;
    align-items: center;
    gap: 3px;
}

.zm {
    font-size: 9px;
    color: #bbb;
}

.slider {
    width: 66px;
    height: 1px;
    background: #999;
    position: relative;
}

.knob {
    position: absolute;
    left: 15px;
    top: -3px;
    width: 3px;
    height: 7px;
    background: #bbb;
}

.mid {
    position: absolute;
    left: 33px;
    top: -1px;
    width: 1px;
    height: 3px;
    background: #999;
}

.pct {
    margin-left: 8px;
    color: #bbb;
}
```
